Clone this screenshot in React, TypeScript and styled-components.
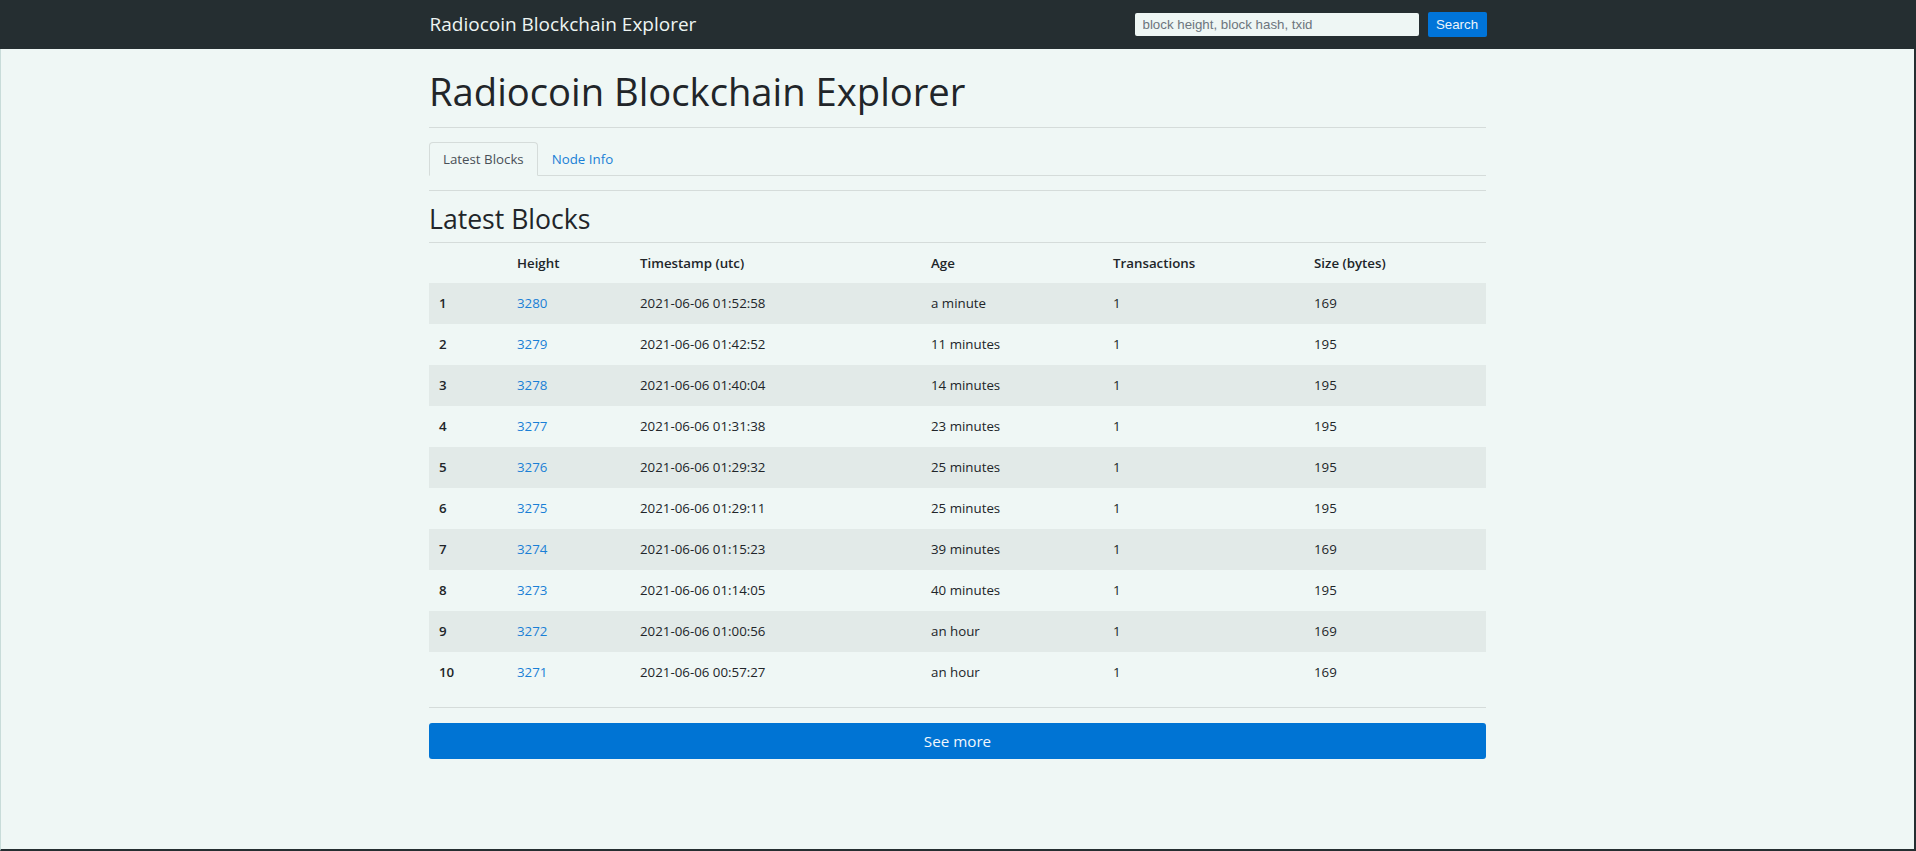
import React from "react";
import styled, { createGlobalStyle } from "styled-components";

const GlobalStyle = createGlobalStyle`
  html, body { margin: 0; padding: 0; }
  body {
    background: #eff7f5;
    font-family: "Open Sans", "Noto Sans", sans-serif;
    font-size: 13.3px;
    line-height: 1.5;
    color: #212529;
  }
  * { box-sizing: border-box; }
`;

const Page = styled.div`
  min-height: 100vh;
  display: flex;
  flex-direction: column;
`;

const NavBar = styled.nav`
  height: 49px;
  flex-shrink: 0;
  background: #252e31;
  display: flex;
  justify-content: center;
`;

const NavInner = styled.div`
  width: 1057px;
  display: flex;
  align-items: center;
  justify-content: space-between;
`;

const Brand = styled.a`
  color: #eef5f3;
  font-size: 19px;
  line-height: 1.5;
  text-decoration: none;
`;

const SearchForm = styled.form`
  display: flex;
  align-items: center;
  gap: 9px;
  margin: 0;
`;

const SearchInput = styled.input`
  width: 284px;
  height: 23px;
  border: none;
  border-radius: 2px;
  background: #eef6f4;
  font-family: "Liberation Sans", Arial, sans-serif;
  font-size: 13.3px;
  padding: 0 8px;
  color: #333;
  outline: none;
  &::placeholder {
    color: #6c757d;
  }
`;

const SearchButton = styled.button`
  width: 59px;
  height: 25px;
  padding: 0;
  border: none;
  border-radius: 2px;
  background: #0074d9;
  color: #eef5fb;
  font-family: "Liberation Sans", Arial, sans-serif;
  font-size: 13.3px;
  cursor: pointer;
`;

const Main = styled.main`
  flex: 1;
  display: flex;
  justify-content: center;
  border-left: 1px solid #c8dcd9;
  border-right: 2px solid #252e31;
  border-bottom: 2px solid #252e31;
`;

const Container = styled.div`
  width: 1057px;
  padding-top: 20px;
`;

const Title = styled.h1`
  margin: 0;
  font-size: 38.2px;
  font-weight: 400;
  line-height: 1.2;
  padding-bottom: 12px;
  border-bottom: 1px solid #d5dcda;
`;

const TabList = styled.ul`
  list-style: none;
  margin: 14px 0 0;
  padding: 0;
  display: flex;
  border-bottom: 1px solid #d5dcda;
`;

const Tab = styled.li<{ $active?: boolean }>`
  margin-bottom: -1px;
  padding: 6px 13px;
  line-height: 20px;
  border: 1px solid ${(p) => (p.$active ? "#d5dcda" : "transparent")};
  border-bottom-color: ${(p) => (p.$active ? "#eff7f5" : "transparent")};
  border-radius: 4px 4px 0 0;
  background: ${(p) => (p.$active ? "#eff7f5" : "transparent")};
  color: ${(p) => (p.$active ? "#495057" : "#1a7fd6")};
  cursor: pointer;
`;

const Divider = styled.hr<{ $gap: number }>`
  margin: ${(p) => p.$gap}px 0 0;
  border: none;
  border-top: 1px solid #d5dcda;
  height: 0;
`;

const SectionTitle = styled.h3`
  margin: 13px 0 0;
  font-size: 26.6px;
  font-weight: 400;
  line-height: 1.2;
  padding-bottom: 6px;
  border-bottom: 1px solid #d5dcda;
`;

const Table = styled.table`
  width: 100%;
  border-collapse: collapse;
  table-layout: fixed;
`;

const HeadCell = styled.th`
  text-align: left;
  font-weight: 600;
  padding: 10px 10px;
  line-height: 20px;
`;

const Row = styled.tr<{ $striped: boolean }>`
  background: ${(p) => (p.$striped ? "#e2eae8" : "transparent")};
`;

const RankCell = styled.th`
  text-align: left;
  font-weight: 600;
  padding: 10.5px 10px;
  line-height: 20px;
`;

const Cell = styled.td`
  padding: 10.5px 10px;
  line-height: 20px;
`;

const BlockLink = styled.a`
  color: #1a7fd6;
  text-decoration: none;
`;

const MoreButton = styled.button`
  display: block;
  width: 100%;
  margin-top: 15px;
  height: 36px;
  padding: 0;
  border: none;
  border-radius: 3px;
  background: #0074d4;
  color: #f2f7fc;
  font-family: "Open Sans", "Noto Sans", sans-serif;
  font-size: 15.2px;
  line-height: 22px;
  cursor: pointer;
`;

const blocks = [
  { height: 3280, time: "2021-06-06 01:52:58", age: "a minute", tx: 1, size: 169 },
  { height: 3279, time: "2021-06-06 01:42:52", age: "11 minutes", tx: 1, size: 195 },
  { height: 3278, time: "2021-06-06 01:40:04", age: "14 minutes", tx: 1, size: 195 },
  { height: 3277, time: "2021-06-06 01:31:38", age: "23 minutes", tx: 1, size: 195 },
  { height: 3276, time: "2021-06-06 01:29:32", age: "25 minutes", tx: 1, size: 195 },
  { height: 3275, time: "2021-06-06 01:29:11", age: "25 minutes", tx: 1, size: 195 },
  { height: 3274, time: "2021-06-06 01:15:23", age: "39 minutes", tx: 1, size: 169 },
  { height: 3273, time: "2021-06-06 01:14:05", age: "40 minutes", tx: 1, size: 195 },
  { height: 3272, time: "2021-06-06 01:00:56", age: "an hour", tx: 1, size: 169 },
  { height: 3271, time: "2021-06-06 00:57:27", age: "an hour", tx: 1, size: 169 },
];

const colWidths = [78, 123, 291, 182, 201, 182];

export default function App() {
  return (
    <Page>
      <GlobalStyle />
      <NavBar>
        <NavInner>
          <Brand href="#">Radiocoin Blockchain Explorer</Brand>
          <SearchForm onSubmit={(e) => e.preventDefault()}>
            <SearchInput placeholder="block height, block hash, txid" />
            <SearchButton type="submit">Search</SearchButton>
          </SearchForm>
        </NavInner>
      </NavBar>
      <Main>
        <Container>
          <Title>Radiocoin Blockchain Explorer</Title>
          <TabList>
            <Tab $active>Latest Blocks</Tab>
            <Tab>Node Info</Tab>
          </TabList>
          <Divider $gap={14} />
          <SectionTitle>Latest Blocks</SectionTitle>
          <Table>
            <colgroup>
              {colWidths.map((w, i) => (
                <col key={i} width={w} />
              ))}
            </colgroup>
            <thead>
              <tr>
                <HeadCell></HeadCell>
                <HeadCell>Height</HeadCell>
                <HeadCell>Timestamp (utc)</HeadCell>
                <HeadCell>Age</HeadCell>
                <HeadCell>Transactions</HeadCell>
                <HeadCell>Size (bytes)</HeadCell>
              </tr>
            </thead>
            <tbody>
              {blocks.map((b, i) => (
                <Row key={b.height} $striped={i % 2 === 0}>
                  <RankCell>{i + 1}</RankCell>
                  <Cell>
                    <BlockLink href="#">{b.height}</BlockLink>
                  </Cell>
                  <Cell>{b.time}</Cell>
                  <Cell>{b.age}</Cell>
                  <Cell>{b.tx}</Cell>
                  <Cell>{b.size}</Cell>
                </Row>
              ))}
            </tbody>
          </Table>
          <Divider $gap={14} />
          <MoreButton>See more</MoreButton>
        </Container>
      </Main>
    </Page>
  );
}
